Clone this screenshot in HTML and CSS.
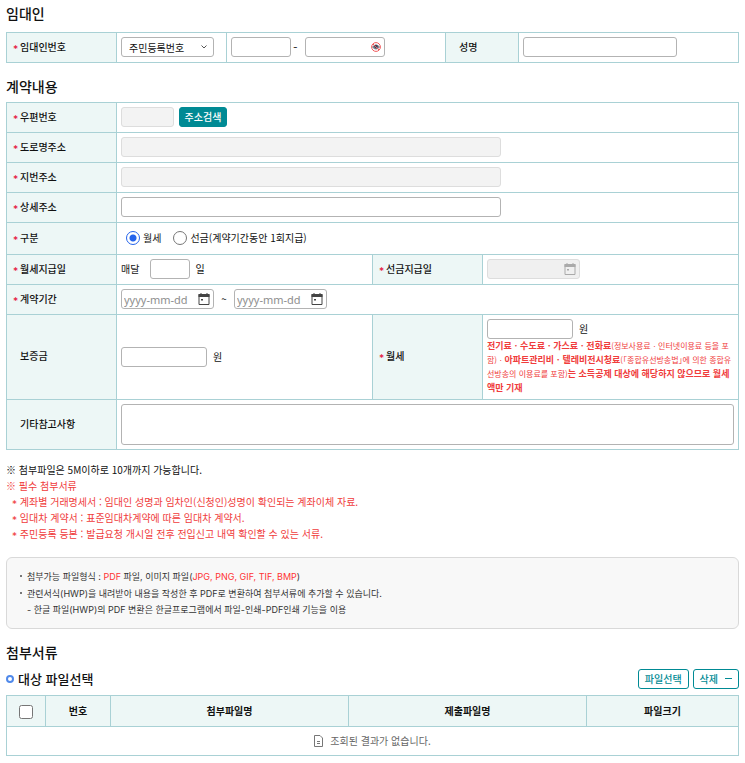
FILE: index.html
```html
<!doctype html>
<html lang="ko">
<head>
  <meta charset="utf-8" />
  <title>임대인 계약내용</title>
  <link rel="stylesheet" href="styles.css">
</head>
<body>

<svg width="0" height="0" class="symbols" aria-hidden="true">
  <symbol id="calendar" viewBox="0 0 12 12">
    <path d="M1 1.5h10v10H1z" fill="none" stroke="currentColor" />
    <path d="M0.5 1h11v3h-11zM2.5 0h1v2h-1zM8.5 0h1v2h-1zM3 6h2v1.5H3z" fill="currentColor" />
  </symbol>
</svg>

<form action="#" method="post">
  <h2 class="title first">임대인</h2>
  <table class="form-table">
    <colgroup>
      <col class="w110"><col class="w110"><col><col class="w73"><col class="w220">
    </colgroup>
    <tr>
      <th scope="row"><label for="lessor-type"><i>*</i>임대인번호</label></th>
      <td>
        <span class="select-box">
          <select id="lessor-type">
            <option>주민등록번호</option>
            <option>사업자등록번호</option>
          </select>
          <svg width="6" height="4" viewBox="0 0 6 4"><path d="M0.5 0.5L3 3l2.5-2.5" fill="none" stroke="#555" /></svg>
        </span>
      </td>
      <td>
        <div class="field">
          <input type="text" class="w60" aria-label="번호 앞자리" />
          <span class="hyphen">-</span>
          <span class="icon-field">
            <input type="password" class="w80" aria-label="번호 뒷자리" />
            <svg width="10" height="10" viewBox="0 0 10 10">
              <path d="M1.5 5Q5 1 8.5 5Q5 9 1.5 5z" fill="#8a94a0" stroke="#6a7480" />
              <circle cx="5" cy="4.6" r="1.8" fill="#38465a" />
              <circle cx="5" cy="5" r="4.4" fill="none" stroke="#f0595b" />
              <path d="M2 2l6 6" stroke="#f0595b" />
            </svg>
          </span>
        </div>
      </td>
      <th scope="row"><label for="lessor-name" class="plain">성명</label></th>
      <td><input type="text" id="lessor-name" class="w154" /></td>
    </tr>
  </table>

  <h2 class="title">계약내용</h2>
  <table class="form-table">
    <colgroup>
      <col class="w110"><col><col class="w110"><col class="w256">
    </colgroup>
    <tr>
      <th scope="row"><label for="zip"><i>*</i>우편번호</label></th>
      <td colspan="3">
        <div class="field gap5">
          <input type="text" id="zip" class="w53" disabled />
          <button type="button" class="btn-fill">주소검색</button>
        </div>
      </td>
    </tr>
    <tr>
      <th scope="row"><label for="road"><i>*</i>도로명주소</label></th>
      <td colspan="3"><input type="text" id="road" class="w380" disabled /></td>
    </tr>
    <tr>
      <th scope="row"><label for="jibun"><i>*</i>지번주소</label></th>
      <td colspan="3"><input type="text" id="jibun" class="w380" disabled /></td>
    </tr>
    <tr>
      <th scope="row"><label for="detail"><i>*</i>상세주소</label></th>
      <td colspan="3"><input type="text" id="detail" class="w380" /></td>
    </tr>
    <tr>
      <th scope="row"><span><i>*</i>구분</span></th>
      <td colspan="3">
        <div class="radios">
          <label><input type="radio" name="kind" checked />월세</label>
          <label><input type="radio" name="kind" />선금(계약기간동안 1회지급)</label>
        </div>
      </td>
    </tr>
    <tr>
      <th scope="row"><label for="pay-day"><i>*</i>월세지급일</label></th>
      <td>
        <div class="field gap5">
          <span class="every">매달</span>
          <input type="text" id="pay-day" class="w40" />
          <span>일</span>
        </div>
      </td>
      <th scope="row"><label for="prepaid-day"><i>*</i>선금지급일</label></th>
      <td>
        <span class="icon-field">
          <input type="text" id="prepaid-day" class="w93 muted" disabled />
          <svg width="12" height="12" class="off"><use href="#calendar" /></svg>
        </span>
      </td>
    </tr>
    <tr>
      <th scope="row"><label for="from"><i>*</i>계약기간</label></th>
      <td colspan="3">
        <div class="field">
          <span class="icon-field">
            <input type="text" id="from" class="w93 date" placeholder="yyyy-mm-dd" />
            <svg width="12" height="12"><use href="#calendar" /></svg>
          </span>
          <span class="tilde">~</span>
          <span class="icon-field">
            <input type="text" class="w93 date" placeholder="yyyy-mm-dd" aria-label="계약기간 종료일" />
            <svg width="12" height="12"><use href="#calendar" /></svg>
          </span>
        </div>
      </td>
    </tr>
    <tr class="tall">
      <th scope="row"><label for="deposit" class="plain">보증금</label></th>
      <td>
        <div class="field gap6">
          <input type="text" id="deposit" class="w86" />
          <span>원</span>
        </div>
      </td>
      <th scope="row"><label for="rent"><i>*</i>월세</label></th>
      <td>
        <div class="field gap6">
          <input type="text" id="rent" class="w86" />
          <span>원</span>
        </div>
        <p class="guide"><b>전기료ㆍ수도료ㆍ가스료ㆍ전화료</b>(정보사용료ㆍ인터넷이용료 등을 포함)ㆍ<b>아파트관리비ㆍ텔레비전시청료</b>(｢종합유선방송법｣에 의한 종합유선방송의 이용료를 포함)<b>는 소득공제 대상에 해당하지 않으므로 월세액만 기재</b></p>
      </td>
    </tr>
    <tr class="tall">
      <th scope="row"><label for="etc" class="plain">기타참고사항</label></th>
      <td colspan="3"><textarea id="etc"></textarea></td>
    </tr>
  </table>

  <div class="notes">
    <p>※ 첨부파일은 5M이하로 10개까지 가능합니다.</p>
    <p class="red">※ 필수 첨부서류</p>
    <ul class="red">
      <li><i>*</i> 계좌별 거래명세서 : 임대인 성명과 임차인(신청인)성명이 확인되는 계좌이체 자료.</li>
      <li><i>*</i> 임대차 계약서 : 표준임대차계약에 따른 임대차 계약서.</li>
      <li><i>*</i> 주민등록 등본 : 발급요청 개시일 전후 전입신고 내역 확인할 수 있는 서류.</li>
    </ul>
  </div>

  <ul class="info">
    <li>첨부가능 파일형식 : <em>PDF</em> 파일, 이미지 파일(<em>JPG, PNG, GIF, TIF, BMP</em>)</li>
    <li>관련서식(HWP)을 내려받아 내용을 작성한 후 PDF로 변환하여 첨부서류에 추가할 수 있습니다.<br />- 한글 파일(HWP)의 PDF 변환은 한글프로그램에서 파일-인쇄-PDF인쇄 기능을 이용</li>
  </ul>

  <h2 class="title">첨부서류</h2>
  <div class="sub-row">
    <h3>대상 파일선택</h3>
    <button type="button" class="btn-line">파일선택</button>
    <button type="button" class="btn-line">삭제
      <svg width="7" height="2" viewBox="0 0 7 2"><path d="M0 0.5h7" stroke="#008a94" stroke-width="1" /></svg>
    </button>
  </div>
  <table class="list-table">
    <colgroup>
      <col class="w39"><col class="w65"><col><col><col class="w152">
    </colgroup>
    <thead>
      <tr>
        <th scope="col"><input type="checkbox" aria-label="전체선택" /></th>
        <th scope="col">번호</th>
        <th scope="col">첨부파일명</th>
        <th scope="col">제출파일명</th>
        <th scope="col">파일크기</th>
      </tr>
    </thead>
    <tbody>
      <tr>
        <td colspan="5">
          <div class="empty">
            <svg width="9" height="12" viewBox="0 0 9 12">
              <path d="M0.5 0.5H6L8.5 3v8.5h-8z" fill="none" stroke="#777" />
              <path d="M3 6.5h3M3 8.5h3" stroke="#777" />
            </svg>
            조회된 결과가 없습니다.
          </div>
        </td>
      </tr>
    </tbody>
  </table>
</form>

</body>
</html>
```
FILE: styles.css
```css
body {
  margin: 0;
  padding: 3px 6px 0;
  background-color: #fff;
  color: #111;
  font-family: "Noto Sans CJK KR", "Noto Sans", sans-serif;
  font-size: 10px;
  line-height: 16px;
}
.symbols {
  position: absolute;
}
h2,
h3,
p,
ul {
  margin: 0;
  padding: 0;
}
li {
  list-style: none;
}
i {
  font-family: Inter, sans-serif;
  font-style: normal;
  line-height: 1;
  vertical-align: -2px;
}
.title {
  margin: 13px 0 6px;
  font-size: 14px;
  font-weight: 500;
  line-height: 20px;
}
.title.first {
  margin: 0 0 9px;
}

/* tables */
table {
  width: 100%;
  table-layout: fixed;
  border-collapse: collapse;
}
th,
td {
  box-sizing: border-box;
  border: 1px solid #a9d1d5;
}
th {
  background-color: #edf7f6;
  font-weight: 500;
}
.form-table th {
  padding: 0 0 2px 6px;
  text-align: left;
}
.form-table td {
  padding: 4px 4px 5px;
}
.form-table .tall td {
  padding-bottom: 4px;
}
.form-table i {
  display: inline-block;
  width: 7px;
  color: #e6143c;
}
.form-table .plain {
  padding-left: 7px;
}

/* fields */
input,
select,
textarea,
button {
  box-sizing: border-box;
  margin: 0;
  font-family: inherit;
  font-size: 10px;
  color: inherit;
}
input[type="text"],
input[type="password"],
select,
textarea {
  display: block;
  height: 20px;
  padding: 0 7px;
  border: 1px solid #b3b3b3;
  border-radius: 3px;
  background-color: #fff;
}
input[type="text"]:disabled {
  border-color: #ddd;
  background-color: #f3f3f3;
}
input[type="text"].muted {
  background-color: #f0f0f0;
}
input[type="text"].date {
  padding: 0 2px;
  font-family: "Noto Sans", sans-serif;
  font-size: 11px;
}
input.date::placeholder {
  color: #8e8e8e;
}
select {
  width: 93px;
  appearance: none;
}
textarea {
  width: 100%;
  height: 41px;
  resize: none;
}
.select-box,
.icon-field {
  display: inline-block;
  position: relative;
  vertical-align: top;
}
.select-box svg {
  position: absolute;
  right: 7px;
  top: 8px;
}
.icon-field svg {
  position: absolute;
  right: 4px;
  top: 4px;
  color: #444;
}
.icon-field svg.off {
  color: #aaa;
}
.icon-field .w80 + svg {
  top: 5px;
}
.field {
  display: flex;
  align-items: center;
}
.gap5 {
  gap: 5px;
}
.gap6 {
  gap: 6px;
}
.hyphen {
  width: 14px;
  padding-left: 2px;
  box-sizing: border-box;
  font-family: Inter, sans-serif;
}
.tilde {
  width: 20px;
  text-align: center;
}
.every {
  margin-right: 6px;
}
.radios {
  display: flex;
  gap: 12px;
  padding: 3px 5px;
}
.radios label {
  display: flex;
  align-items: center;
  gap: 3px;
}
input[type="radio"] {
  width: 14px;
  height: 14px;
  border: 1px solid #767676;
  border-radius: 50%;
  appearance: none;
}
input[type="radio"]:checked {
  border-color: #2463eb;
  background: radial-gradient(circle, #2463eb 3px, #fff 4px);
}
.guide {
  color: #f03c3c;
  font-size: 8px;
  line-height: 14px;
}
.guide b {
  font-size: 9px;
  line-height: 1;
}

/* buttons */
button {
  height: 20px;
  padding: 0 6px;
  border: 1px solid #008a94;
  border-radius: 3px;
  font-weight: 500;
  line-height: 16px;
  white-space: nowrap;
}
.btn-fill {
  width: 48px;
  padding: 0;
  background-color: #008a94;
  color: #fff;
}
.btn-line {
  display: flex;
  align-items: center;
  gap: 7px;
  background-color: #fff;
  color: #008a94;
}

/* notes */
.notes {
  margin-top: 12px;
}
.red {
  color: #f03c3c;
}
.notes li {
  padding-left: 6px;
}
.info {
  margin-top: 15px;
  padding: 11px 13px 10px;
  border: 1px solid #d9d9d9;
  border-radius: 6px;
  background-color: #f8f8f8;
  color: #333;
  font-family: Inter, "Noto Sans CJK KR", sans-serif;
  font-size: 9px;
}
.info li {
  position: relative;
  padding-left: 7px;
}
.info li + li {
  margin-top: 1px;
}
.info li::before {
  content: "";
  position: absolute;
  left: 0;
  top: 6px;
  width: 2px;
  height: 2px;
  background-color: #777;
}
.info em {
  color: #f33;
  font-style: normal;
}

/* attached files */
.sub-row {
  display: flex;
  align-items: center;
  gap: 4px;
  padding: 1px 0 6px;
}
.sub-row h3 {
  display: flex;
  align-items: center;
  gap: 4px;
  flex: 1;
  font-size: 13px;
  font-weight: 500;
  line-height: 20px;
}
.sub-row h3::before {
  content: "";
  box-sizing: border-box;
  width: 8px;
  height: 8px;
  border: 2px solid #5089ea;
  border-radius: 50%;
}
.list-table th {
  height: 31px;
  padding: 0 0 1px;
  font-weight: 700;
}
.list-table td {
  height: 29px;
  padding: 0;
}
.list-table input {
  display: block;
  width: 14px;
  height: 14px;
  margin: 2px auto 0;
}
.empty {
  display: flex;
  justify-content: center;
  align-items: center;
  gap: 7px;
  color: #666;
}

/* widths */
.w39 { width: 39px; }
.w40 { width: 40px; }
.w53 { width: 53px; }
.w60 { width: 60px; }
.w65 { width: 65px; }
.w73 { width: 73px; }
.w80 { width: 80px; }
.w86 { width: 86px; }
.w93 { width: 93px; }
.w110 { width: 110px; }
.w152 { width: 152px; }
.w154 { width: 154px; }
.w220 { width: 220px; }
.w256 { width: 256px; }
.w380 { width: 380px; }
```
